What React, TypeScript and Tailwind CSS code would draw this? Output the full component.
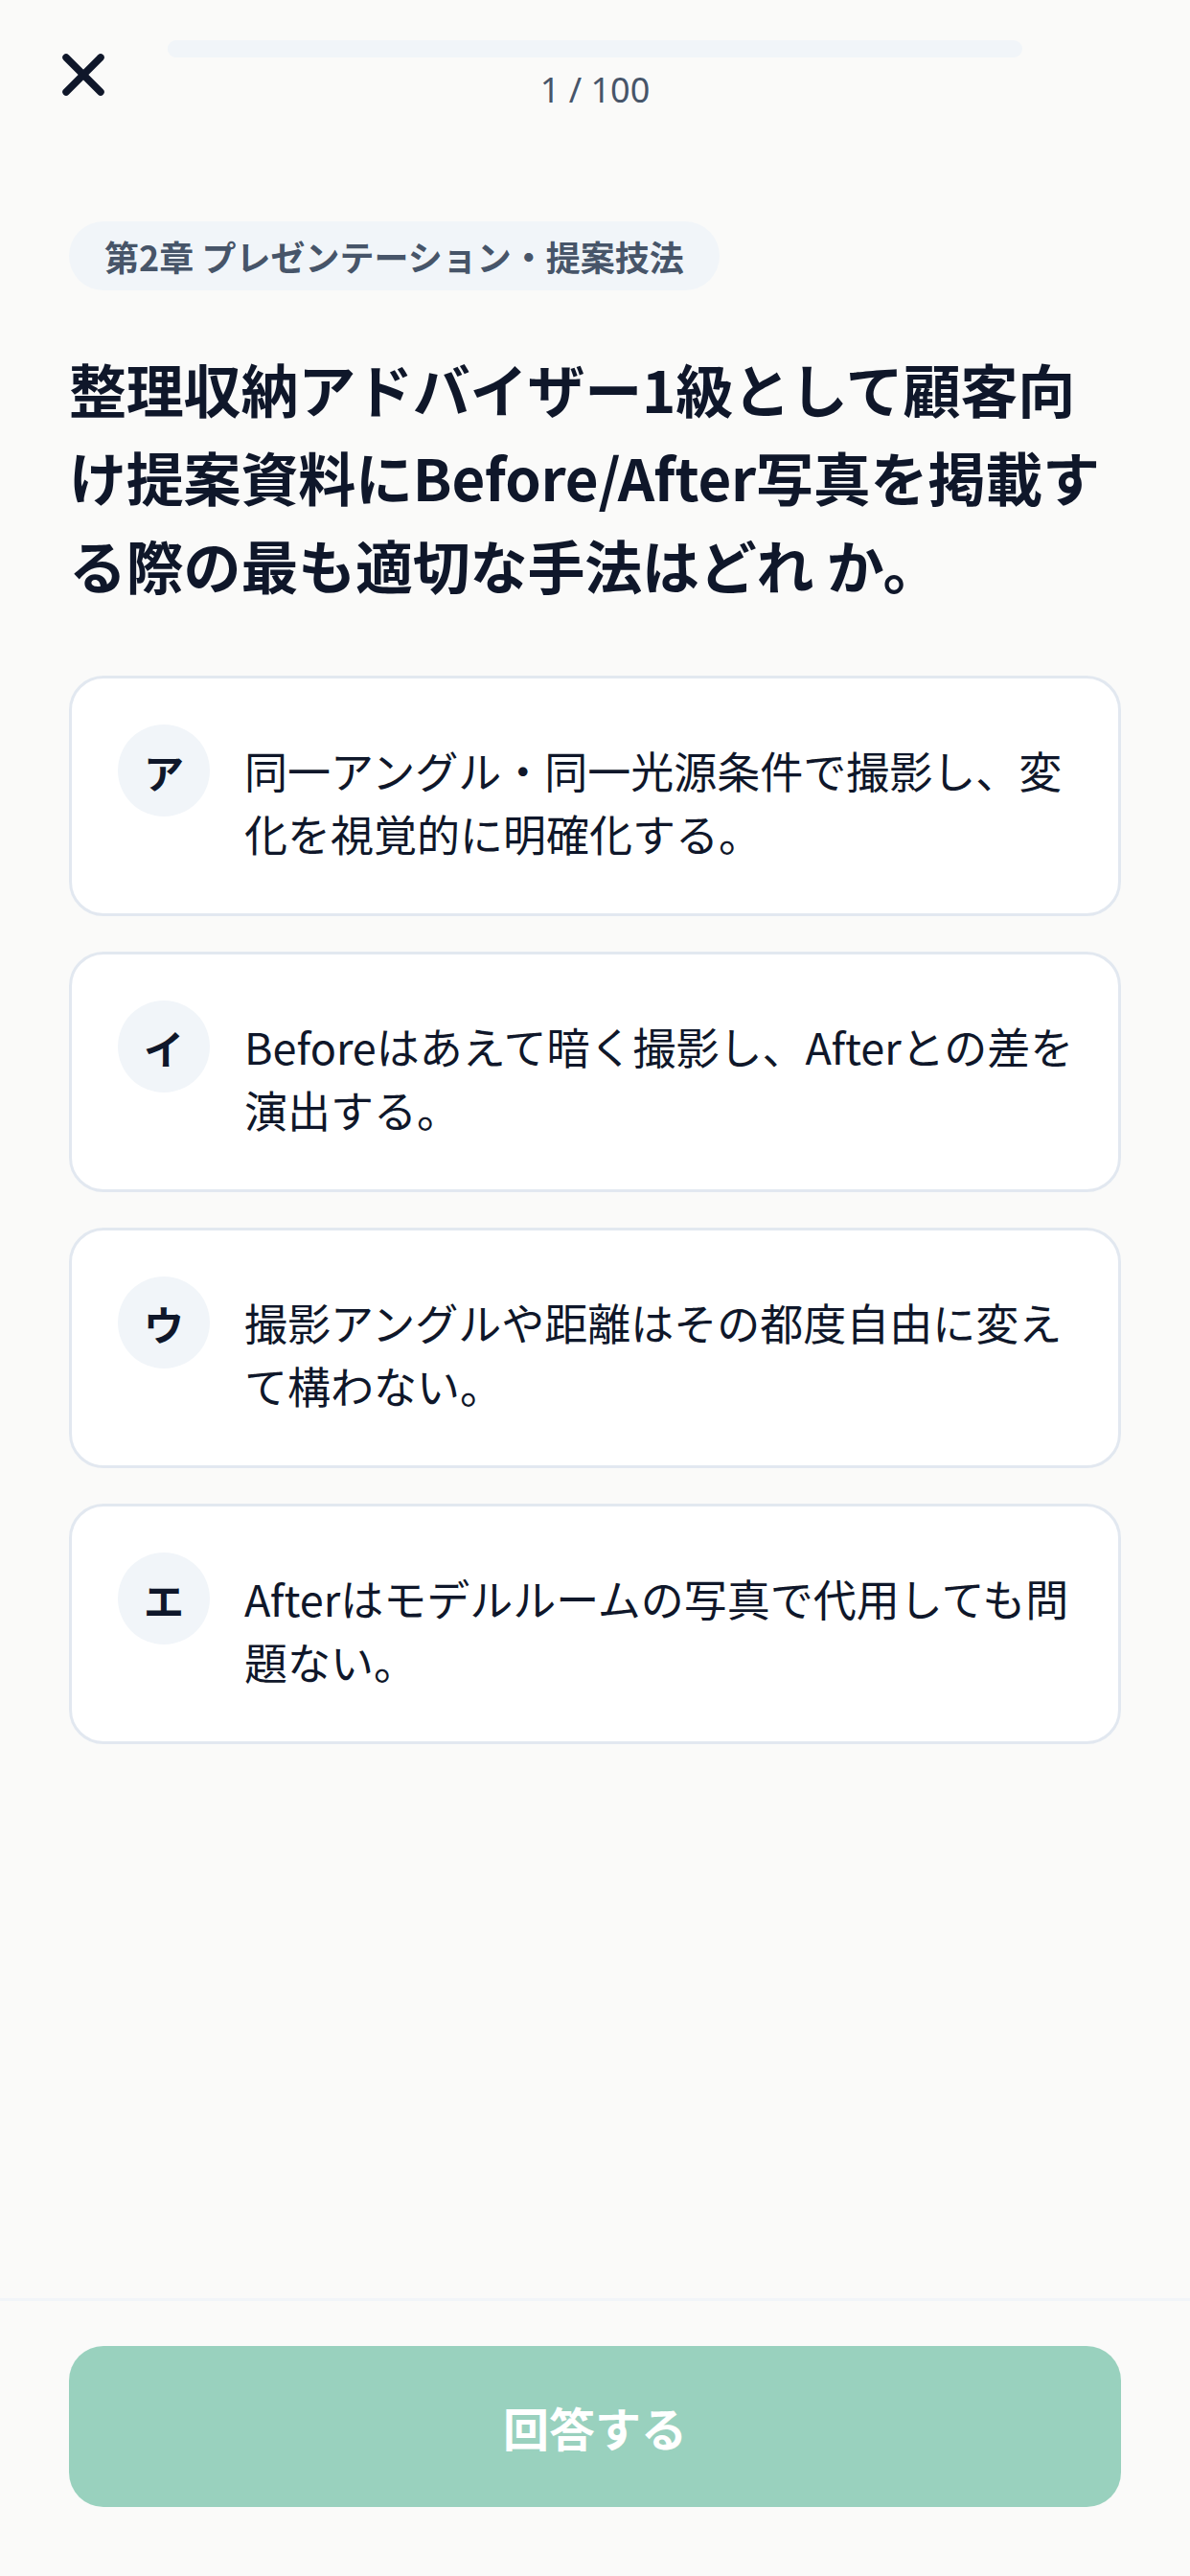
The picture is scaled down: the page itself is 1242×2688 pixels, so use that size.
import React from "react";
import { X } from "lucide-react";

const options = [
  { label: "ア", lines: ["同一アングル・同一光源条件で撮影し、変", "化を視覚的に明確化する。"] },
  { label: "イ", lines: ["Beforeはあえて暗く撮影し、Afterとの差を", "演出する。"] },
  { label: "ウ", lines: ["撮影アングルや距離はその都度自由に変え", "て構わない。"] },
  { label: "エ", lines: ["Afterはモデルルームの写真で代用しても問", "題ない。"] },
];

const titleLines = [
  "整理収納アドバイザー1級として顧客向",
  "け提案資料にBefore/After写真を掲載す",
  "る際の最も適切な手法はどれ か。",
];

export default function App() {
  return (
    <div className="min-h-[2688px] w-[1242px] bg-[#fafaf9] flex flex-col font-['Noto_Sans_CJK_JP','Noto_Sans',sans-serif] text-[#0f172a]">
      {/* Header */}
      <header className="flex items-start px-[48px] pt-[42px]">
        <button className="w-[78px] h-[72px] flex items-center justify-center text-[#0f172a] shrink-0">
          <X size={72} strokeWidth={2.5} />
        </button>
        <div className="flex-1 mx-[49px] flex flex-col items-center">
          <div className="w-full h-[18px] rounded-full bg-[#f1f5f9] overflow-hidden">
            <div className="h-full w-[1%] bg-[#f1f5f9]" />
          </div>
          <div className="mt-[8px] text-[36px] leading-[52px] text-[#475569] font-['Noto_Sans',sans-serif]">
            1 / 100
          </div>
        </div>
        <div className="w-[78px] shrink-0" />
      </header>

      {/* Main */}
      <main className="flex-1 px-[72px] pt-[111px]">
        <div className="inline-flex items-center rounded-full bg-[#f1f5f9] px-[37px] py-[12px] text-[36px] leading-[48px] font-bold text-[#475569]">
          第2章 プレゼンテーション・提案技法
        </div>

        <h1 className="mt-[56px] text-[60px] leading-[92px] font-bold text-[#0f172a]">
          {titleLines.map((l) => (
            <span key={l} className="block whitespace-nowrap tracking-[-0.2px]">
              {l}
            </span>
          ))}
        </h1>

        <div className="mt-[70px] flex flex-col gap-[37px]">
          {options.map((o) => (
            <div
              key={o.label}
              className="flex items-start gap-[36px] rounded-[36px] border-[3px] border-[#e2e8f0] bg-white px-[48px] pt-[48px] pb-[50px]"
            >
              <div className="w-[96px] h-[96px] shrink-0 rounded-full bg-[#f1f5f9] flex items-center justify-center text-[42px] font-bold text-[#0f172a]">
                {o.label}
              </div>
              <div className="pt-[15px] text-[45px] leading-[66px] text-[#0f172a]">
                {o.lines.map((l) => (
                  <span key={l} className="block whitespace-nowrap">
                    {l}
                  </span>
                ))}
              </div>
            </div>
          ))}
        </div>
      </main>

      {/* Footer */}
      <footer className="border-t-[3px] border-[#f1f5f9] px-[72px] pt-[47px] pb-[72px]">
        <button className="w-full h-[168px] rounded-[36px] bg-[#99d1be] text-white text-[48px] font-bold flex items-center justify-center">
          回答する
        </button>
      </footer>
    </div>
  );
}
